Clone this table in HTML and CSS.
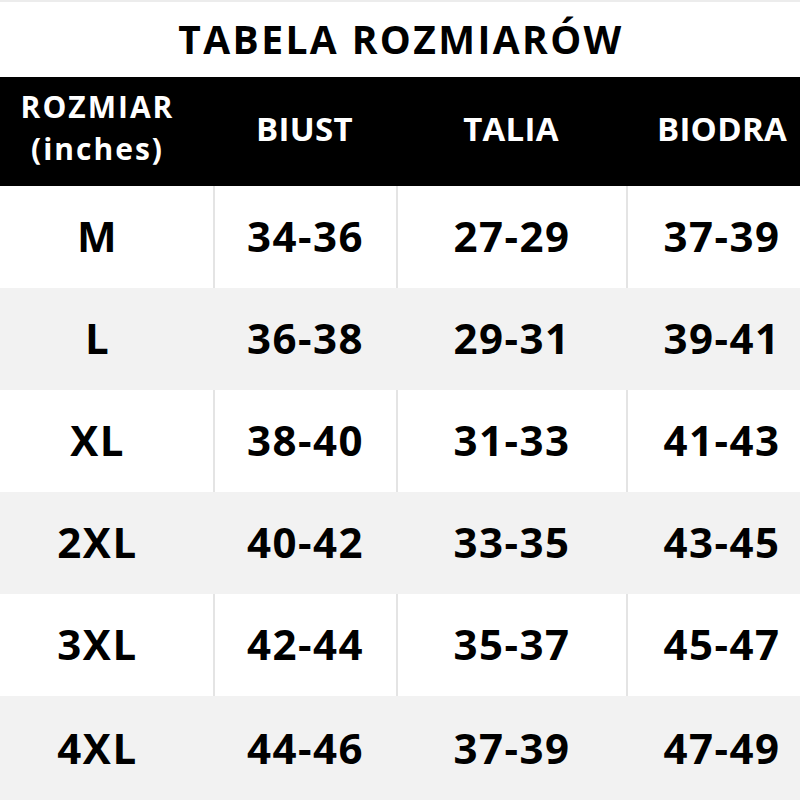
FILE: index.html
```html
<!DOCTYPE html>
<html lang="pl">
<head>
<meta charset="utf-8">
<link rel="stylesheet" href="styles.css">
</head>
<body>
<div class="page">
  <h1 class="title">TABELA ROZMIARÓW</h1>
  <div class="table">
    <div class="row head">
      <div class="cell size-head">ROZMIAR<br>(inches)</div>
      <div class="cell">BIUST</div>
      <div class="cell">TALIA</div>
      <div class="cell">BIODRA</div>
    </div>
    <div class="row white">
      <div class="cell">M</div><div class="cell">34-36</div><div class="cell">27-29</div><div class="cell">37-39</div>
    </div>
    <div class="row gray">
      <div class="cell">L</div><div class="cell">36-38</div><div class="cell">29-31</div><div class="cell">39-41</div>
    </div>
    <div class="row white">
      <div class="cell">XL</div><div class="cell">38-40</div><div class="cell">31-33</div><div class="cell">41-43</div>
    </div>
    <div class="row gray">
      <div class="cell">2XL</div><div class="cell">40-42</div><div class="cell">33-35</div><div class="cell">43-45</div>
    </div>
    <div class="row white">
      <div class="cell">3XL</div><div class="cell">42-44</div><div class="cell">35-37</div><div class="cell">45-47</div>
    </div>
    <div class="row gray last">
      <div class="cell">4XL</div><div class="cell">44-46</div><div class="cell">37-39</div><div class="cell">47-49</div>
    </div>
  </div>
</div>
</body>
</html>
```
FILE: styles.css
```css
html, body {
  margin: 0;
  padding: 0;
  background: #ffffff;
}
.page {
  width: 800px;
  height: 800px;
  overflow: hidden;
  font-family: "Open Sans", "Noto Sans", sans-serif;
  font-weight: 700;
  color: #000;
  border-top: 2px solid #ececec;
  box-sizing: border-box;
}
.title {
  margin: 0;
  height: 75px;
  display: flex;
  align-items: center;
  justify-content: center;
  font-size: 39px;
  font-weight: 700;
  letter-spacing: 2.4px;
  padding-left: 2px;
  padding-bottom: 2px;
  box-sizing: border-box;
}
.table {
  display: flex;
  flex-direction: column;
}
.row {
  display: grid;
  grid-template-columns: 213px 183px 230px 174px;
  height: 102px;
}
.cell {
  display: flex;
  align-items: center;
  justify-content: center;
  text-align: center;
  font-size: 42px;
  line-height: 1;
  letter-spacing: 1.5px;
  padding-bottom: 2px;
  box-sizing: border-box;
}
.row .cell:first-child {
  padding-right: 18px;
}
.head {
  height: 109px;
  background: #000;
  color: #fff;
}
.head .cell {
  font-size: 33px;
  line-height: 1.3;
  letter-spacing: 0.3px;
  padding-bottom: 4px;
}
.head .size-head {
  font-size: 30px;
  line-height: 42px;
  letter-spacing: 2px;
  padding-bottom: 7px;
}
.head .cell:last-child {
  padding-left: 18px;
}
.row:not(.head) .cell:last-child {
  padding-left: 16px;
}
.white {
  background: #fff;
}
.white .cell + .cell {
  border-left: 2px solid #e4e4e4;
}
.gray {
  background: #f2f2f2;
}
.gray .cell + .cell {
  border-left: 2px solid #f2f2f2;
}
.last {
  height: 105px;
}
```
